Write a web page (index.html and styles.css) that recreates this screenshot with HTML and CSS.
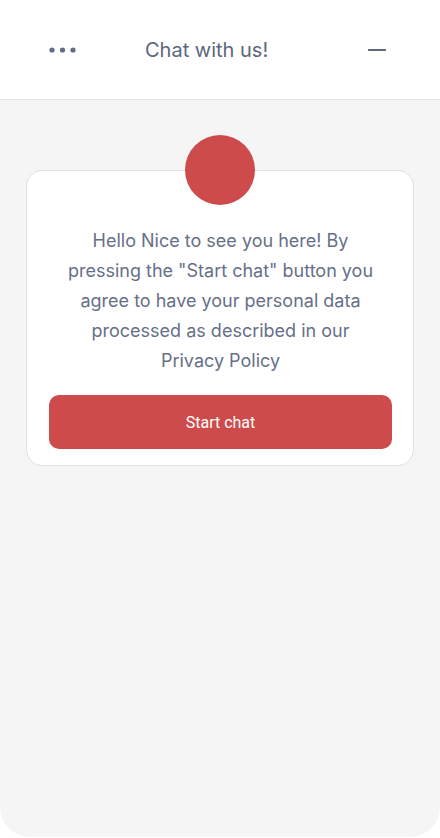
FILE: index.html
```html
<!DOCTYPE html>
<html lang="en">
<head>
    <meta charset="UTF-8">
    <meta name="viewport" content="width=device-width, initial-scale=1.0">
    <title>Chat with us!</title>
    <link rel="stylesheet" href="styles.css">
</head>
<body>

<div class="widget">
    <div class="chat-header">
        <button class="icon-btn dots" aria-label="Menu">
            <svg width="28" height="6" viewBox="0 0 28 6">
                <circle cx="3" cy="3" r="2.6" fill="#5f6b85"/>
                <circle cx="13.5" cy="3" r="2.6" fill="#5f6b85"/>
                <circle cx="24" cy="3" r="2.6" fill="#5f6b85"/>
            </svg>
        </button>
        <div class="chat-title">Chat with us!</div>
        <button class="icon-btn minimize" aria-label="Minimize">
            <svg width="18" height="4" viewBox="0 0 18 4">
                <rect x="0" y="1" width="18" height="2" rx="0.5" fill="#5f6b85"/>
            </svg>
        </button>
    </div>

    <div class="chat-body">
        <div class="welcome-card">
            <div class="avatar"></div>
            <p class="welcome-text">Hello Nice to see you here! By pressing the "Start chat" button you agree to have your personal data processed as described in our Privacy Policy</p>
            <button class="start-btn">Start chat</button>
        </div>
    </div>
</div>

</body>
</html>
```

FILE: styles.css
```css
body {
    margin: 0;
    background-color: #fff;
    font-family: Inter, "Noto Sans", sans-serif;
}

.widget {
    width: 440px;
    height: 837px;
    display: flex;
    flex-direction: column;
    background-color: #f5f5f5;
    border-radius: 0 0 30px 30px;
    overflow: hidden;
}

.chat-header {
    height: 99px;
    display: flex;
    align-items: center;
    padding: 0 54px 0 49px;
    background-color: #fff;
    border-bottom: 1px solid #e3e3e3;
}

.icon-btn {
    background: none;
    border: none;
    padding: 0;
    display: flex;
    cursor: pointer;
}

.chat-title {
    margin-left: 68px;
    font-size: 20px;
    color: #5d677c;
}

.minimize {
    margin-left: auto;
}

.chat-body {
    flex: 1;
    padding: 70px 26px 0 26px;
}

.welcome-card {
    position: relative;
    background-color: #fff;
    border: 1px solid #e2e2e2;
    border-radius: 16px;
    padding: 55px 21px 16px 22px;
}

.avatar {
    position: absolute;
    top: -36px;
    left: 50%;
    margin-left: -35px;
    width: 70px;
    height: 70px;
    border-radius: 50%;
    background-color: #ce4b4c;
}

.welcome-text {
    margin: 0 15px;
    text-align: center;
    font-size: 18px;
    line-height: 30px;
    color: #667088;
}

.start-btn {
    display: block;
    width: 100%;
    height: 54px;
    margin-top: 19px;
    border: none;
    border-radius: 10px;
    background-color: #ce4b4c;
    color: #fff;
    font-family: Roboto, "Noto Sans", sans-serif;
    font-size: 16px;
    cursor: pointer;
}
```
